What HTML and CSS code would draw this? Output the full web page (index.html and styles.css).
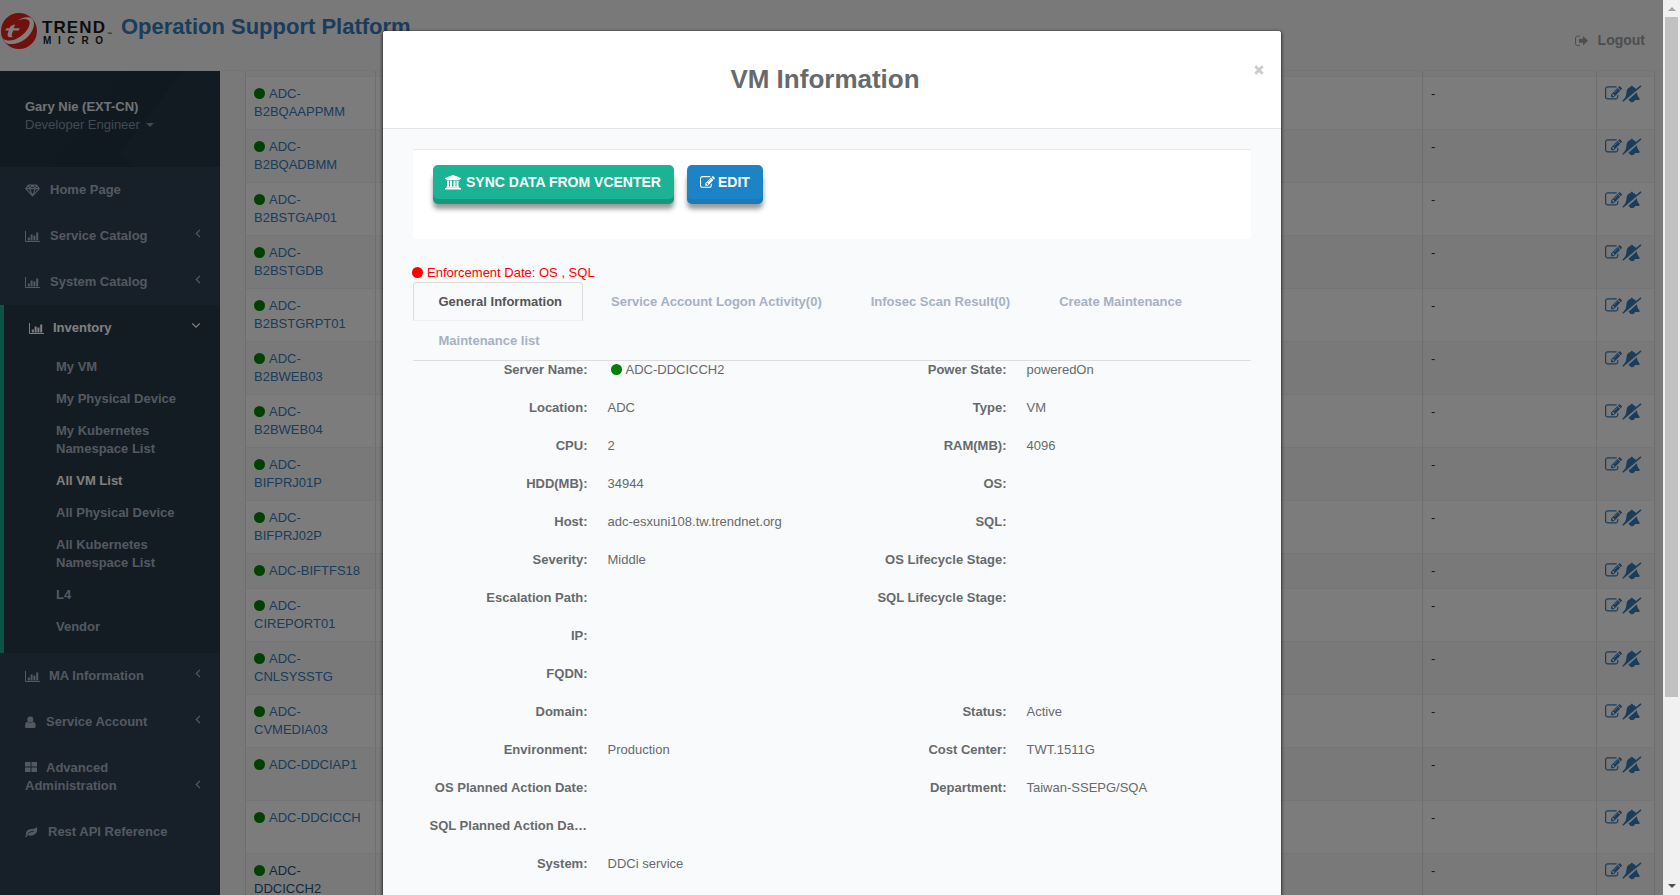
FILE: index.html
```
<!DOCTYPE html>
<html lang="en">
<head>
<meta charset="utf-8">
<title>Operation Support Platform</title>
<link rel="stylesheet" href="styles.css">
</head>
<body>
<svg class="defs" aria-hidden="true">
  <symbol id="chart" viewBox="0 0 15 13"><path d="M.5 1v10.500H15" fill="none" stroke="currentColor"/><path d="M2.800 7.500h2v3h-2zM5.600 4.500h2v6h-2zM8.400 5.500h2v5h-2zM11.200 2.500h2v8h-2z" fill="currentColor"/></symbol>
  <symbol id="gem" viewBox="0 0 16 14"><path d="M3.600 1.200h8.800L15.300 5 8 12.800.7 5zM.7 5h14.600M3.600 1.200 5 5l3 7.800L11 5l1.400-3.800M8 1.200 5 5M8 1.200 11 5" fill="none" stroke="currentColor" stroke-width="1.200" stroke-linejoin="round"/></symbol>
  <symbol id="user" viewBox="0 0 11 13"><circle cx="5.300" cy="3.500" r="3" fill="currentColor"/><path d="M2.500 5.800C.7 6 0 8 0 10.200 0 11.500.8 12 1.800 12h7c1 0 1.900-.5 1.900-1.800 0-2.200-.7-4.200-2.500-4.400C6.500 7.300 4.200 7.300 2.500 5.800z" fill="currentColor"/></symbol>
  <symbol id="grid" viewBox="0 0 12 12"><path d="M0 1h5.500v4.500H0zM6.500 1H12v4.500H6.500zM0 6.500h5.500V11H0zM6.500 6.500H12V11H6.500z" fill="currentColor"/></symbol>
  <symbol id="leaf" viewBox="0 0 14 12"><path d="M0 11.300c.2-.9 1-1.500 1.300-2.200C.4 6.500 2 4 4.500 3.200 7.500 2.300 11 3 12.400.5c1.500 2.300.9 6.200-1.700 8-2.300 1.800-5.200 1.900-7.600.6-.7.600-1.400 1.800-2 2.500z" fill="currentColor"/><path d="M3 8c1.600-1.800 3.800-2.700 6.300-2.800" stroke="#2f4050" fill="none"/></symbol>
  <symbol id="edit" viewBox="0 0 1792 1536"><path d="M888 1056l116-116-152-152-116 116v56h96v96h56zm440-720q-16-16-33 1L945 687q-17 17-1 33t33-1l350-350q17-17 1-33zm80 594v190q0 119-84.500 203.500T1120 1408H288q-119 0-203.500-84.500T0 1120V288Q0 169 84.500 84.500T288 0h832q63 0 117 25 15 7 18 23 3 17-9 29l-49 49q-14 14-32 8-23-6-45-6H288q-66 0-113 47t-47 113v832q0 66 47 113t113 47h832q66 0 113-47t47-113V994q0-13 9-22l64-64q15-15 35-7t20 29zm-96-738l288 288-672 672H640V864zm444 132l-92 92-288-288 92-92q28-28 68-28t68 28l152 152q28 28 28 68t-28 68z" fill="currentColor"/></symbol>
  <symbol id="bell-slash" viewBox="0 0 20 18"><path d="M1.600 14.600C4.200 12 4.200 9.800 4.600 6.500 4.900 4 6.500 2.600 8.600 2.100 8.600.3 11 .3 11 2.100c1.400.3 2.500 1 3.200 2.200L2.500 14.800z" fill="currentColor"/><path d="M14.900 7.300c.2 2.600.8 4.200 2.800 6.400 0 .8-.4 1.300-1.100 1.300h-3.800c0 1.300-1.100 2.200-2.800 2.200-1.600 0-2.500-.9-2.800-2.200h-1z" fill="currentColor"/><path d="M.7 16.300 19 .9" stroke="currentColor" stroke-width="1.500"/></symbol>
  <symbol id="exit" viewBox="0 0 13 12"><path d="M5 1H2.500Q.5 1 .5 3v5.500q0 2 2 2H5" fill="none" stroke="currentColor"/><path d="M4 3.800h4V1l5 4.800-5 4.800V7.800H4z" fill="currentColor"/></symbol>
  <symbol id="bank" viewBox="0 0 16 15"><path d="M8 0l8 3v1h-1.200v.9H1.200V4H0V3zM2 5.500h2V11.500h1V5.500h2v6h1.500v-6h2v6h1v-6h2v6.300h.9v.9H1.200v-.9H2zM0 13h16v1.500H0z" fill="currentColor"/></symbol>
  <symbol id="chev" viewBox="0 0 6 9"><path d="M5 .8 1.300 4.500 5 8.200" fill="none" stroke="currentColor" stroke-width="1.200"/></symbol>
</svg>

<div class="page">
  <header class="topbar">
    <div class="brand">
      <svg class="brand-ball" viewBox="0 0 36 36"><circle cx="18" cy="18" r="18" fill="#e2231a"/><path d="M1.800 25.500C4 27.500 9 28.500 14 26.500 22 23.500 30 14.500 28.500 8.500 27.500 5.500 22 5.200 16.500 7.500 20 4.500 27 3 30.500 5.200 35.500 9 32.500 19 25 25.500 17.500 31.500 8 32.500 4.200 29.200z" fill="#fff"/><path d="M14.200 11.300 12.600 15.200h6.200l-1.200 2.200h-5.400c-1.600 4-2 5.600-.4 6.300-3.600 1.600-6.200-.2-5-3.500l1-2.800H4.200l1.200-2.200h3.200l1-2.200z" fill="#fff"/></svg>
      <div class="brand-name"><span class="trend">TREND</span><span class="tm">™</span><span class="micro">MICRO</span></div>
    </div>
    <h2 class="site-title">Operation Support Platform</h2>
    <div class="logout"><svg width="13" height="12"><use href="#exit"/></svg><span>Logout</span></div>
  </header>

  <div class="main">
    <nav class="side">
      <div class="profile">
        <strong>Gary Nie (EXT-CN)</strong>
        <span>Developer Engineer <i class="caret"></i></span>
      </div>
      <a class="item"><svg class="ic" width="15" height="13"><use href="#gem"/></svg><span class="t">Home Page</span></a>
      <a class="item"><svg class="ic" width="15" height="13"><use href="#chart"/></svg><span class="t">Service Catalog</span><svg class="arr" width="6" height="9"><use href="#chev"/></svg></a>
      <a class="item"><svg class="ic" width="15" height="13"><use href="#chart"/></svg><span class="t">System Catalog</span><svg class="arr" width="6" height="9"><use href="#chev"/></svg></a>
      <div class="open">
        <a class="item"><svg class="ic" width="15" height="13"><use href="#chart"/></svg><span class="t">Inventory</span><svg class="arr down" width="6" height="9"><use href="#chev"/></svg></a>
        <a class="sub">My VM</a>
        <a class="sub">My Physical Device</a>
        <a class="sub">My Kubernetes Namespace List</a>
        <a class="sub current">All VM List</a>
        <a class="sub">All Physical Device</a>
        <a class="sub">All Kubernetes Namespace List</a>
        <a class="sub">L4</a>
        <a class="sub">Vendor</a>
      </div>
      <a class="item ma"><svg class="ic" width="15" height="13"><use href="#chart"/></svg><span class="t">MA Information</span><svg class="arr" width="6" height="9"><use href="#chev"/></svg></a>
      <a class="item"><svg class="ic" width="11" height="13"><use href="#user"/></svg><span class="t">Service Account</span><svg class="arr" width="6" height="9"><use href="#chev"/></svg></a>
      <a class="item wrap"><span class="t"><svg class="ic" width="12" height="12"><use href="#grid"/></svg>Advanced Administration</span><svg class="arr" width="6" height="9"><use href="#chev"/></svg></a>
      <a class="item"><svg class="ic" width="13" height="12"><use href="#leaf"/></svg><span class="t">Rest API Reference</span></a>
    </nav>

    <div class="content"><div class="vm-table" id="rows"><div class="row head"><div></div><div></div><div></div><div></div></div></div></div>
  </div>
</div>
<div class="backdrop"></div>

<div class="modal">
  <div class="modal-head"><h4>VM Information</h4><svg class="close" width="10" height="10" viewBox="0 0 10 10"><path d="M1.300 1.300l7.400 7.400M8.700 1.300 1.300 8.700" stroke="#ccc" stroke-width="2.800"/></svg></div>
  <div class="modal-body">
    <div class="actions">
      <button class="btn sync"><svg width="16" height="15"><use href="#bank"/></svg><span>SYNC DATA FROM VCENTER</span></button>
      <button class="btn edit"><svg width="15" height="13"><use href="#edit"/></svg><span>EDIT</span></button>
    </div>
    <div class="enforce"><i class="dot red"></i>Enforcement Date: OS , SQL</div>
    <div class="tabs">
      <a class="tab active">General Information</a><a class="tab">Service Account Logon Activity(0)</a><a class="tab">Infosec Scan Result(0)</a><a class="tab">Create Maintenance</a><a class="tab">Maintenance list</a>
    </div>
    <dl class="info">
      <dt>Server Name:</dt><dd class="server"><i class="dot"></i>ADC-DDCICCH2</dd><dt>Power State:</dt><dd>poweredOn</dd>
      <dt>Location:</dt><dd>ADC</dd><dt>Type:</dt><dd>VM</dd>
      <dt>CPU:</dt><dd>2</dd><dt>RAM(MB):</dt><dd>4096</dd>
      <dt>HDD(MB):</dt><dd>34944</dd><dt>OS:</dt><dd></dd>
      <dt>Host:</dt><dd>adc-esxuni108.tw.trendnet.org</dd><dt>SQL:</dt><dd></dd>
      <dt>Severity:</dt><dd>Middle</dd><dt>OS Lifecycle Stage:</dt><dd></dd>
      <dt>Escalation Path:</dt><dd></dd><dt>SQL Lifecycle Stage:</dt><dd></dd>
      <dt>IP:</dt><dd></dd><dt></dt><dd></dd>
      <dt>FQDN:</dt><dd></dd><dt></dt><dd></dd>
      <dt>Domain:</dt><dd></dd><dt>Status:</dt><dd>Active</dd>
      <dt>Environment:</dt><dd>Production</dd><dt>Cost Center:</dt><dd>TWT.1511G</dd>
      <dt>OS Planned Action Date:</dt><dd></dd><dt>Department:</dt><dd>Taiwan-SSEPG/SQA</dd>
      <dt>SQL Planned Action Date:</dt><dd></dd><dt></dt><dd></dd>
      <dt>System:</dt><dd>DDCi service</dd><dt></dt><dd></dd>
    </dl>
  </div>
</div>

<div class="scrollbar"><i class="up"></i><i class="thumb"></i><i class="dn"></i></div>
<script src="app.js"></script>
</body>
</html>
```
FILE: styles.css
```
* { box-sizing: border-box; }
html, body { height: 100%; overflow: hidden; }
body { margin: 0; font: 13px/18px "Liberation Sans", Arial, sans-serif; color: #676a6c; background: #f3f3f4; }
h2, h4, dl, dd { margin: 0; }
svg { display: block; flex: none; overflow: visible; }
.defs { position: absolute; width: 0; height: 0; }
.page { width: 1663px; height: 895px; overflow: hidden; display: flex; flex-direction: column; }

.topbar { height: 71px; flex: none; display: flex; border-bottom: 1px solid #e7eaec; }
.brand { width: 121px; display: flex; padding: 13px 0 0 1px; }
.brand-ball { width: 36px; height: 36px; }
.brand-name { display: grid; grid-template-columns: 65px 10px; align-content: start; padding: 6px 0 0 5px; font-weight: bold; color: #1a1a1a; }
.trend { font-size: 17px; line-height: 17px; letter-spacing: 1.100px; }
.tm { font-size: 5px; line-height: 30px; height: 17px; }
.micro { font-size: 10px; line-height: 9px; letter-spacing: 6.700px; padding-left: 1px; white-space: nowrap; }
.site-title { font-size: 22px; line-height: 26px; padding-top: 14px; color: #337ab7; white-space: nowrap; }
.logout { margin-left: auto; padding: 30px 18px 0 0; display: flex; font-size: 14px; line-height: 20px; font-weight: bold; color: #999c9e; }
.logout svg { margin: 5px 10px 0 0; }

.main { flex: 1; display: flex; min-height: 0; }
.side { width: 220px; flex: none; background: #2f4050; color: #a7b1c2; font-weight: bold; }
.profile { height: 96px; padding: 27px 25px; display: flex; flex-direction: column; font-weight: normal;
  background: linear-gradient(128deg, #253443 0 42%, #233240 42.500% 62%, transparent 62.500%), linear-gradient(40deg, #233240 40%, #253545 41%); }
.profile strong { color: #dfe4ed; }
.profile span { color: #8095a8; }
.caret { display: inline-block; border: 4px solid transparent; border-top-color: currentColor; border-bottom: 0; margin: 0 0 2px 2px; }
.item { display: flex; min-height: 46px; padding: 14px 19px 14px 25px; }
.item .ic { margin: 3px 10px 0 0; }
.item .arr { margin: 2px 0 0 auto; }
.item.wrap { align-items: flex-end; }
.item.wrap .t { width: 120px; }
.item.wrap .ic { display: inline-block; vertical-align: -1px; margin: 0 9px 0 0; }
.item.wrap .arr { margin-bottom: 6px; }
.ma .ic { margin-right: 9px; }
.open { height: 348px; background: #293846; border-left: 4px solid #19aa8d; }
.open .item { color: #fff; }
.open .ic { margin-right: 9px; }
.open .arr { transform: rotate(-90deg); margin-right: 2px; }
.sub { display: block; padding: 7px 35px 7px 52px; }
.current { color: #fff; }

.content { flex: 1; padding-left: 25px; }
.vm-table { width: 1410px; border-left: 1px solid #ddd; }
.row { display: grid; grid-template-columns: 130px 1047px 174px 58px; height: 53px; }
.row.head { height: 5px; }
.row.short { height: 35px; }
.row > div { border-top: 1px solid #e7eaec; border-right: 1px solid #ddd; padding: 8px; color: #333; }
.row.head > div { border-top: 0; padding: 0; }
.row.odd { background: #f9f9f9; }
.row > .name { color: #337ab7; }
.row.cur > .name { color: #23527c; }
.row > .acts { display: flex; color: #337ab7; }
.acts svg:first-child { margin-top: 1px; }
.dot { display: inline-block; width: 11px; height: 11px; border-radius: 50%; background: green; vertical-align: -1px; margin-right: 4px; }
.dot.red { background: red; margin-left: -1px; }

.backdrop { position: absolute; inset: 0 17px 0 0; background: rgba(0, 0, 0, .5); }

.modal { position: absolute; left: 382px; top: 30px; width: 900px; height: 900px; border: 1px solid transparent; border-radius: 4px; background: #f8fafb; background-clip: padding-box; box-shadow: 0 1px 3px rgba(0, 0, 0, .6); }
.modal-head { height: 98px; background: #fff; border-bottom: 1px solid #e2e5e8; border-radius: 3px 3px 0 0; padding: 34px 17px 0 30px; display: flex; }
.modal-head h4 { flex: 1; text-align: center; font-size: 26px; line-height: 28px; padding-right: 17px; }
.modal-body { padding: 20px 30px; }
.actions { height: 90px; border-top: 1px solid #e7eaec; background: #fff; padding: 15px 20px; display: flex; gap: 13px; }
.btn { height: 34px; border: 0; border-radius: 5px; padding: 0 13px 0 12px; color: #fff; font: bold 14px/20px "Liberation Sans", Arial, sans-serif; display: flex; align-items: center; gap: 5px; white-space: nowrap; }
.sync { width: 241px; background: #1ab394; box-shadow: 0 5px 0 #16987e, 0 10px 5px #999; }
.edit { width: 76px; background: #1c84c6; box-shadow: 0 5px 0 #1a7bb9, 0 10px 5px #999; gap: 3px; }
.edit svg { margin-left: 1px; }
.enforce { color: red; margin-top: 25px; height: 18px; }
.tabs { display: flex; flex-wrap: wrap; height: 79px; border-bottom: 1px solid #ddd; font-weight: bold; color: #a7b1c2; align-content: flex-start; }
.tab { height: 39px; padding: 10px 20px 10px 25px; border: 1px solid transparent; margin-right: 2px; border-radius: 4px 4px 0 0; }
.tab:nth-child(1), .tab:nth-child(5) { padding-left: 24.500px; }
.tab.active { color: #555; border-color: #ddd; border-bottom-color: #f1f1f1; }
.info { display: grid; grid-template-columns: 174.500px 244px 175px 244px; grid-auto-rows: 38px; }
.info dt { font-weight: bold; text-align: right; padding-left: 16.500px; overflow: hidden; text-overflow: ellipsis; white-space: nowrap; }
.info dd { padding-left: 20px; }
.info .server { padding-left: 23px; }

.scrollbar { position: absolute; right: 0; top: 0; width: 17px; height: 895px; background: #f1f1f1; display: flex; flex-direction: column; align-items: center; }
.up { border: 4px solid transparent; border-bottom-color: #a3a3a3; border-top: 0; margin: 7px 0 6px; }
.thumb { width: 13px; height: 680px; background: #c1c1c1; }
.dn { border: 4px solid transparent; border-top-color: #505050; border-bottom: 0; margin: auto 0 7px; }
```
FILE: app.js
```
const names = ['B2BQAAPPMM', 'B2BQADBMM', 'B2BSTGAP01', 'B2BSTGDB', 'B2BSTGRPT01', 'B2BWEB03', 'B2BWEB04', 'BIFPRJ01P', 'BIFPRJ02P', 'BIFTFS18', 'CIREPORT01', 'CNLSYSSTG', 'CVMEDIA03', 'DDCIAP1', 'DDCICCH', 'DDCICCH2'];
const oneLine = ['BIFTFS18', 'DDCIAP1', 'DDCICCH'];
document.getElementById('rows').insertAdjacentHTML('beforeend', names.map((n, i) => `
  <div class="row${i % 2 ? '' : ' odd'}${n === 'BIFTFS18' ? ' short' : ''}${n === 'DDCICCH2' ? ' cur' : ''}">
    <div class="name"><i class="dot"></i>ADC-${oneLine.includes(n) ? '' : '<br>'}${n}</div><div></div><div>-</div>
    <div class="acts"><svg width="17" height="15"><use href="#edit"/></svg><svg width="20" height="18"><use href="#bell-slash"/></svg></div>
  </div>`).join(''));
```
